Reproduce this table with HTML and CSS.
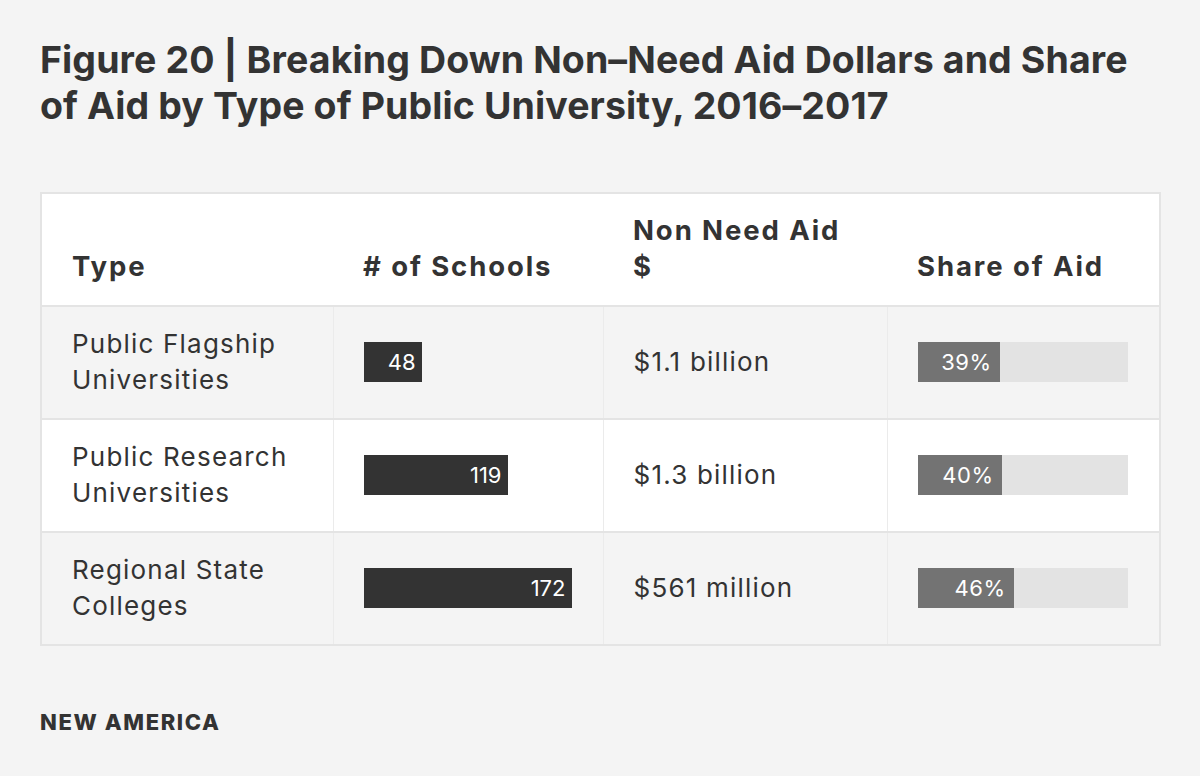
FILE: index.html
```html
<!DOCTYPE html>
<html>
<head>
<meta charset="utf-8">
<link rel="stylesheet" href="styles.css">
</head>
<body>
<div class="page">
  <h1 class="title">Figure 20 | Breaking Down Non–Need Aid Dollars and Share of Aid by Type of Public University, 2016–2017</h1>
  <table class="data">
    <colgroup>
      <col class="c1"><col class="c2"><col class="c3"><col class="c4">
    </colgroup>
    <thead>
      <tr class="head">
        <th>Type</th>
        <th># of Schools</th>
        <th>Non Need Aid<br>$</th>
        <th>Share of Aid</th>
      </tr>
    </thead>
    <tbody>
      <tr class="odd">
        <td class="name">Public Flagship<br>Universities</td>
        <td><div class="count" style="width:58px">48</div></td>
        <td class="amt">$1.1 billion</td>
        <td><div class="track"><div class="fill" style="width:82px">39%</div></div></td>
      </tr>
      <tr class="even">
        <td class="name">Public Research<br>Universities</td>
        <td><div class="count" style="width:144px">119</div></td>
        <td class="amt">$1.3 billion</td>
        <td><div class="track"><div class="fill" style="width:84px">40%</div></div></td>
      </tr>
      <tr class="odd">
        <td class="name">Regional State<br>Colleges</td>
        <td><div class="count" style="width:208px">172</div></td>
        <td class="amt">$561 million</td>
        <td><div class="track"><div class="fill" style="width:96px">46%</div></div></td>
      </tr>
    </tbody>
  </table>
  <div class="brand">NEW AMERICA</div>
</div>
</body>
</html>
```
FILE: styles.css
```css
html, body {
  margin: 0;
  padding: 0;
  background: #f4f4f4;
}
.page {
  padding: 37px 40px 0 40px;
  font-family: Inter, "Noto Sans", sans-serif;
  color: #333333;
}
.title {
  margin: 0;
  font-size: 37.5px;
  line-height: 46px;
  font-weight: 700;
  letter-spacing: 0.1px;
  width: 1120px;
}
.data {
  margin-top: 63px;
  width: 1119px;
  border-collapse: collapse;
  border: 2px solid #e4e4e4;
  table-layout: fixed;
}
.c1 { width: 292px; }
.c2 { width: 270px; }
.c3 { width: 284px; }
.c4 { width: 273px; }
.head { background: #ffffff; height: 113px; }
.head th {
  text-align: left;
  vertical-align: bottom;
  font-size: 27.5px;
  line-height: 36px;
  font-weight: 700;
  letter-spacing: 1.9px;
  padding: 0 0 21px 30px;
}
tbody tr { height: 113px; border-top: 2px solid #e4e4e4; }
.odd { background: #f4f4f4; }
.even { background: #ffffff; }
tbody td {
  padding: 0 0 2px 30px;
  font-size: 26px;
  line-height: 36px;
  letter-spacing: 1.2px;
  vertical-align: middle;
  border-left: 1px solid #ebebeb;
}
tbody td:first-child { border-left: none; }
.count {
  height: 40px;
  background: #333333;
  color: #ffffff;
  font-size: 22px;
  line-height: 40px;
  text-align: right;
  padding-right: 6px;
  box-sizing: border-box;
  letter-spacing: 0;
}
.track {
  width: 210px;
  height: 40px;
  background: #e3e3e3;
}
.fill {
  height: 40px;
  background: #737373;
  color: #ffffff;
  font-size: 22px;
  line-height: 40px;
  text-align: right;
  padding-right: 8px;
  box-sizing: border-box;
  letter-spacing: 0.5px;
}
.brand {
  margin-top: 63px;
  font-size: 22px;
  font-weight: 800;
  letter-spacing: 1.6px;
}
```
